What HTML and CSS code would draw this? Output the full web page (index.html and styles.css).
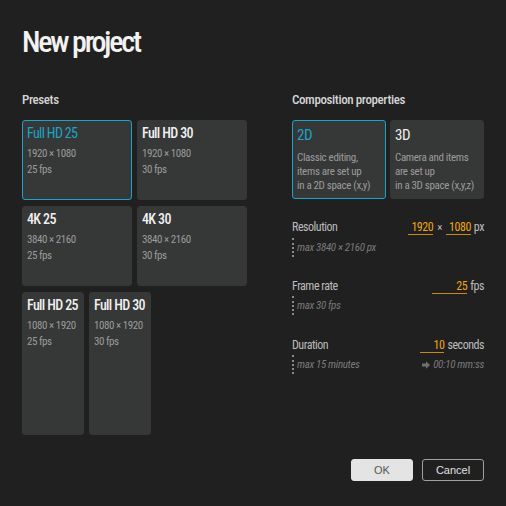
FILE: index.html
```html
<!DOCTYPE html>
<html lang="en">
<head>
<meta charset="utf-8">
<title>New project</title>
<link rel="stylesheet" href="styles.css">
</head>
<body>
<div class="page">
  <h1 class="title">New project</h1>
  <div class="columns">
    <section class="presets">
      <h2 class="heading">Presets</h2>
      <div class="grid">
        <div class="row">
          <div class="card land selected">
            <div class="card-title">Full HD 25</div>
            <div class="card-sub">1920 × 1080</div>
            <div class="card-sub">25 fps</div>
          </div>
          <div class="card land">
            <div class="card-title">Full HD 30</div>
            <div class="card-sub">1920 × 1080</div>
            <div class="card-sub">30 fps</div>
          </div>
        </div>
        <div class="row">
          <div class="card land">
            <div class="card-title">4K 25</div>
            <div class="card-sub">3840 × 2160</div>
            <div class="card-sub">25 fps</div>
          </div>
          <div class="card land">
            <div class="card-title">4K 30</div>
            <div class="card-sub">3840 × 2160</div>
            <div class="card-sub">30 fps</div>
          </div>
        </div>
        <div class="row">
          <div class="card port">
            <div class="card-title">Full HD 25</div>
            <div class="card-sub">1080 × 1920</div>
            <div class="card-sub">25 fps</div>
          </div>
          <div class="card port">
            <div class="card-title">Full HD 30</div>
            <div class="card-sub">1080 × 1920</div>
            <div class="card-sub">30 fps</div>
          </div>
        </div>
      </div>
    </section>
    <section class="comp">
      <h2 class="heading">Composition properties</h2>
      <div class="modes">
        <div class="mode selected">
          <div class="mode-title">2D</div>
          <div class="mode-desc">Classic editing,<br>items are set up<br>in a 2D space (x,y)</div>
        </div>
        <div class="mode">
          <div class="mode-title">3D</div>
          <div class="mode-desc">Camera and items<br>are set up<br>in a 3D space (x,y,z)</div>
        </div>
      </div>
      <div class="prop">
        <div class="prop-row">
          <span class="prop-label">Resolution</span>
          <span class="prop-value"><span class="field w25">1920</span><span class="sep">×</span><span class="field w25">1080</span><span class="unit">px</span></span>
        </div>
        <div class="hint-row">
          <span class="hint">max 3840 × 2160 px</span>
        </div>
      </div>
      <div class="prop">
        <div class="prop-row">
          <span class="prop-label">Frame rate</span>
          <span class="prop-value"><span class="field w35">25</span><span class="unit">fps</span></span>
        </div>
        <div class="hint-row">
          <span class="hint">max 30 fps</span>
        </div>
      </div>
      <div class="prop">
        <div class="prop-row">
          <span class="prop-label">Duration</span>
          <span class="prop-value"><span class="field w24">10</span><span class="unit">seconds</span></span>
        </div>
        <div class="hint-row">
          <span class="hint">max 15 minutes</span>
          <span class="conv"><svg class="arrow" width="8" height="8" viewBox="0 0 8 8"><path d="M0 2.6H4V0.3L8 4L4 7.7V5.4H0Z" fill="#707070"/></svg>00:10 mm:ss</span>
        </div>
      </div>
    </section>
  </div>
  <div class="actions">
    <button class="btn ok">OK</button>
    <button class="btn cancel">Cancel</button>
  </div>
</div>
</body>
</html>
```
FILE: styles.css
```css
html, body {
  margin: 0;
  padding: 0;
  background: #202020;
}
body {
  width: 506px;
  height: 506px;
  overflow: hidden;
  font-family: "Roboto Condensed", Roboto, sans-serif;
  font-stretch: 75%;
  color: #e8e8e8;
}
.page {
  padding: 23px 22px 0 22px;
}
.title {
  margin: 0;
  font-size: 30px;
  line-height: 38px;
  font-weight: 500;
  letter-spacing: -2.2px;
  color: #f2f2f2;
}
.columns {
  display: flex;
  gap: 45px;
  margin-top: 31px;
}
.presets {
  width: 225px;
}
.comp {
  width: 192px;
}
.heading {
  margin: 0 0 12px 0;
  font-size: 13px;
  line-height: 16px;
  font-weight: 500;
  letter-spacing: -0.03em;
  color: #d4d4d4;
}
.grid {
  display: flex;
  flex-direction: column;
  gap: 6px;
}
.row {
  display: flex;
  gap: 5px;
}
.card {
  box-sizing: border-box;
  background: #363737;
  border: 1px solid #363737;
  border-radius: 3px;
  padding: 3px 4px;
  white-space: nowrap;
}
.card.land {
  width: 110px;
  height: 80px;
}
.card.port {
  width: 62px;
  height: 143px;
}
.card.selected, .mode.selected {
  border-color: #1ba4c8;
}
.card-title {
  font-size: 14px;
  line-height: 18px;
  font-weight: 500;
  letter-spacing: -0.045em;
  color: #f0f0f0;
  margin-bottom: 4px;
}
.selected .card-title, .selected .mode-title {
  color: #1ba4c8;
  font-weight: normal;
}
.card-sub {
  font-size: 11px;
  line-height: 16px;
  letter-spacing: -0.04em;
  color: #9c9c9c;
}
.modes {
  display: flex;
  gap: 4px;
}
.mode {
  box-sizing: border-box;
  width: 94px;
  height: 79px;
  background: #363737;
  border: 1px solid #363737;
  border-radius: 3px;
  padding: 4px 4px;
  white-space: nowrap;
}
.mode-title {
  font-size: 15px;
  line-height: 20px;
  letter-spacing: -0.03em;
  color: #f0f0f0;
  margin-bottom: 6px;
}
.mode-desc {
  font-size: 11px;
  line-height: 14px;
  letter-spacing: -0.03em;
  color: #9c9c9c;
}
.prop {
  margin-top: 20px;
  height: 38px;
}
.prop + .prop {
  margin-top: 21px;
}
.prop:last-child {
  margin-top: 21px;
}
.prop-row {
  display: flex;
  justify-content: space-between;
  align-items: baseline;
  font-size: 12px;
  line-height: 16px;
  letter-spacing: -0.04em;
}
.prop-label {
  color: #bcbcbc;
}
.prop-value {
  display: flex;
  align-items: baseline;
  color: #bcbcbc;
}
.field {
  display: inline-block;
  text-align: right;
  color: #f0a414;
  border-bottom: 1px solid #c98a12;
  line-height: 14px;
}
.w25 { width: 25px; }
.w35 { width: 35px; }
.w24 { width: 24px; }
.sep {
  margin: 0 4px;
  font-size: 11px;
}
.unit {
  margin-left: 3px;
}
.hint-row {
  display: flex;
  justify-content: space-between;
  align-items: center;
  margin-top: 2px;
  border-left: 2px dotted #8a8a8a;
  padding-left: 3px;
  height: 19px;
}
.hint {
  font-size: 11px;
  font-style: italic;
  letter-spacing: -0.03em;
  color: #7a7a7a;
}
.conv {
  font-size: 11px;
  font-style: italic;
  letter-spacing: -0.03em;
  color: #7a7a7a;
  display: flex;
  align-items: center;
  gap: 3px;
}
.actions {
  display: flex;
  justify-content: flex-end;
  gap: 9px;
  margin-top: 24px;
}
.btn {
  box-sizing: border-box;
  width: 62px;
  height: 22px;
  border-radius: 3px;
  font-family: "Liberation Sans", Arial, sans-serif;
  font-stretch: normal;
  font-size: 11px;
  padding: 0;
}
.btn.ok {
  background: #e4e4e4;
  border: 1px solid #e4e4e4;
  color: #555555;
}
.btn.cancel {
  background: #202020;
  border: 1px solid #a0a0a0;
  color: #e0e0e0;
}
```
